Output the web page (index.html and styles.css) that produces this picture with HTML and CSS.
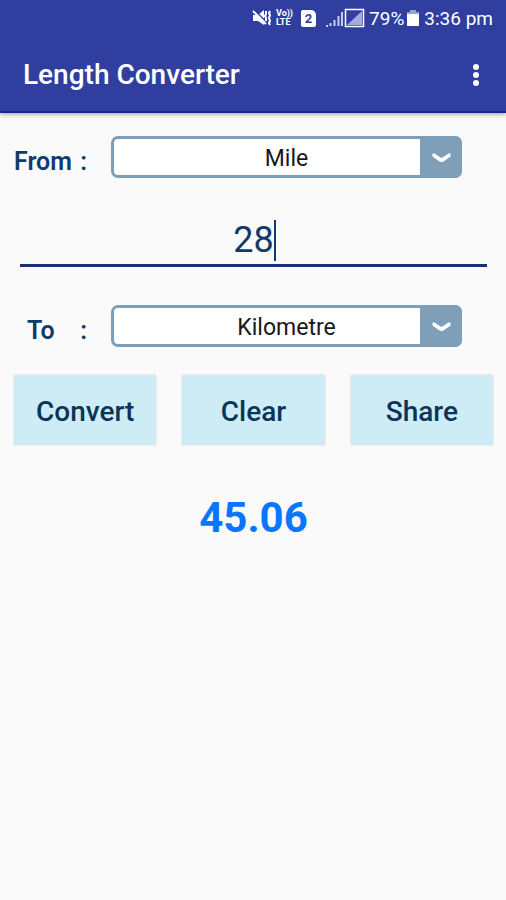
FILE: index.html
```html
<!DOCTYPE html>
<html lang="en">
<head>
<meta charset="utf-8">
<meta name="viewport" content="width=device-width, initial-scale=1">
<title>Length Converter</title>
<link rel="stylesheet" href="styles.css">
</head>
<body>
<header class="header">
  <div class="status">
    <svg class="icon" width="19" height="18" viewBox="0 0 19 18" aria-hidden="true">
      <path d="M1 6h5l6-5v15l-6-4H1z" fill="#fff"/>
      <path d="M2 1l13 13" stroke="#303f9f" stroke-width="2"/>
      <path d="M1 2l13 13" stroke="#fff" stroke-width="2"/>
      <path d="M14 2v3l-1 2 1 2v3M18 2l-1 2 1 2-1 3 1 3-1 2 1 2" fill="none" stroke="#fff" stroke-width="2"/>
    </svg>
    <span class="volte"><span>Vo))</span><span>LTE</span></span>
    <span class="sim">2</span>
    <svg class="signals" width="40" height="20" viewBox="0 0 40 20" aria-hidden="true">
      <path d="M1 18h2M5.500 18v-3M9.500 18v-6M13.500 18V8M17 18V4" fill="none" stroke="#c5cbee" stroke-width="2"/>
      <rect x="20.500" y="1.500" width="18" height="17" fill="none" stroke="#fff" stroke-width="1.500"/>
      <path d="M37 3v14H22z" fill="#a4acdd"/>
    </svg>
    <span class="percent">79%</span>
    <svg class="battery" width="12" height="18" viewBox="0 0 12 18" aria-hidden="true">
      <path d="M3 1h6v2h3v14H0V3h3z" fill="#fff"/>
      <path d="M3 1h6v2h3v2H0V3h3z" fill="#9aa3d8"/>
    </svg>
    <span class="time">3:36 pm</span>
  </div>
  <div class="appbar">
    <h1 class="title">Length Converter</h1>
    <button class="menu" type="button" aria-label="More options">
      <svg width="8" height="24" viewBox="0 0 8 24" aria-hidden="true" fill="#fff">
        <circle cx="4" cy="4" r="3"/><circle cx="4" cy="12" r="3"/><circle cx="4" cy="20" r="3"/>
      </svg>
    </button>
  </div>
</header>
<main>
  <form class="form">
    <div class="row">
      <label class="label" for="from"><span>From</span><span>:</span></label>
      <div class="picker">
        <select class="select" id="from"><option>Mile</option><option>Kilometre</option></select>
        <svg class="arrow" width="42" height="42" viewBox="0 0 42 42" aria-hidden="true">
          <path d="M12.500 17.500v3l7 5q2 1 4 0l7-5v-3l-2 0-6 4q-1 .6-2 0l-6-4z" fill="#fff"/>
        </svg>
      </div>
    </div>
    <div class="amount">
      <input class="value" type="text" inputmode="decimal" aria-label="Value" value="28">
      <span class="caret"></span>
    </div>
    <div class="row">
      <label class="label label-to" for="to"><span>To</span><span>:</span></label>
      <div class="picker">
        <select class="select" id="to"><option>Kilometre</option><option>Mile</option></select>
        <svg class="arrow" width="42" height="42" viewBox="0 0 42 42" aria-hidden="true">
          <path d="M12.500 17.500v3l7 5q2 1 4 0l7-5v-3l-2 0-6 4q-1 .6-2 0l-6-4z" fill="#fff"/>
        </svg>
      </div>
    </div>
    <div class="actions">
      <button class="action" type="button">Convert</button>
      <button class="action" type="button">Clear</button>
      <button class="action" type="button">Share</button>
    </div>
    <output class="result" for="from to">45.06</output>
  </form>
</main>
</body>
</html>
```
FILE: styles.css
```css
* { box-sizing: border-box; }

body {
  margin: 0;
  background: #fafafa;
  color: #123a6b;
  font-family: Roboto, "Liberation Sans", sans-serif;
}

.header {
  background: #303f9f;
  color: #fff;
  border-bottom: 2px solid #14288c;
  box-shadow: 0 1px 5px rgba(0, 0, 0, 0.4);
}

.status {
  display: flex;
  align-items: center;
  justify-content: flex-end;
  height: 36px;
  padding: 0 13px;
  font-size: 19px;
}

.icon { margin-right: 5px; }

.volte {
  display: flex;
  flex-direction: column;
  margin-right: 8px;
  font-size: 9px;
  line-height: 9px;
  font-weight: 700;
}

.sim {
  width: 15px;
  margin-right: 9px;
  border-radius: 2px 5px 2px 2px;
  background: #fff;
  color: #303f9f;
  font-size: 13px;
  line-height: 17px;
  font-weight: 700;
  text-align: center;
}

.signals { margin-right: 4px; }
.battery { margin: 0 5px 0 3px; }

.appbar {
  display: flex;
  align-items: center;
  justify-content: space-between;
  height: 75px;
  padding: 2px 18px 0 23px;
}

.title {
  margin: 0;
  font-size: 28px;
  line-height: 32px;
  font-weight: 500;
}

.menu {
  display: flex;
  padding: 8px;
  border: 0;
  background: none;
}

.form {
  display: flex;
  flex-direction: column;
  padding: 23px 13px 23px 14px;
}

.row {
  display: flex;
  align-items: center;
  padding-right: 31px;
}

.label {
  display: flex;
  justify-content: space-between;
  width: 97px;
  padding: 10px 24px 0 0;
  font-size: 25px;
  line-height: 32px;
  font-weight: 600;
}

.label-to { padding-left: 13px; }

.picker {
  position: relative;
  flex: 1;
}

.select {
  display: block;
  width: 100%;
  height: 42px;
  padding: 3px 0 0;
  appearance: none;
  border: 3px solid #7f9fb8;
  border-radius: 7px;
  background: #fff;
  color: #181818;
  font: 23px/32px Roboto, "Liberation Sans", sans-serif;
  text-align: center;
  text-align-last: center;
}

.arrow {
  position: absolute;
  top: 0;
  right: 0;
  border-radius: 0 7px 7px 0;
  background: #7f9fb8;
  pointer-events: none;
}

.amount {
  position: relative;
  margin: 38px 6px;
}

.value {
  display: block;
  width: 100%;
  height: 51px;
  padding: 0;
  border: 0;
  border-bottom: 3px solid #1b2f73;
  background: none;
  color: #123a6b;
  font: 36px/44px Roboto, "Liberation Sans", sans-serif;
  text-align: center;
}

.caret {
  position: absolute;
  top: 4px;
  left: calc(50% + 20px);
  width: 2px;
  height: 41px;
  background: #123a6b;
}

.actions {
  display: grid;
  grid-template-columns: repeat(3, 1fr);
  gap: 26px;
  margin-top: 28px;
}

.action {
  height: 70px;
  padding: 3px 0 0;
  border: 0;
  background: #ceecf6;
  box-shadow: 0 0 2px rgba(0, 0, 0, 0.15);
  color: #0b3558;
  font: 500 28px/32px Roboto, "Liberation Sans", sans-serif;
}

.result {
  margin-top: 48px;
  color: #0a76ff;
  font-size: 42px;
  line-height: 50px;
  font-weight: 700;
  text-align: center;
}
```
